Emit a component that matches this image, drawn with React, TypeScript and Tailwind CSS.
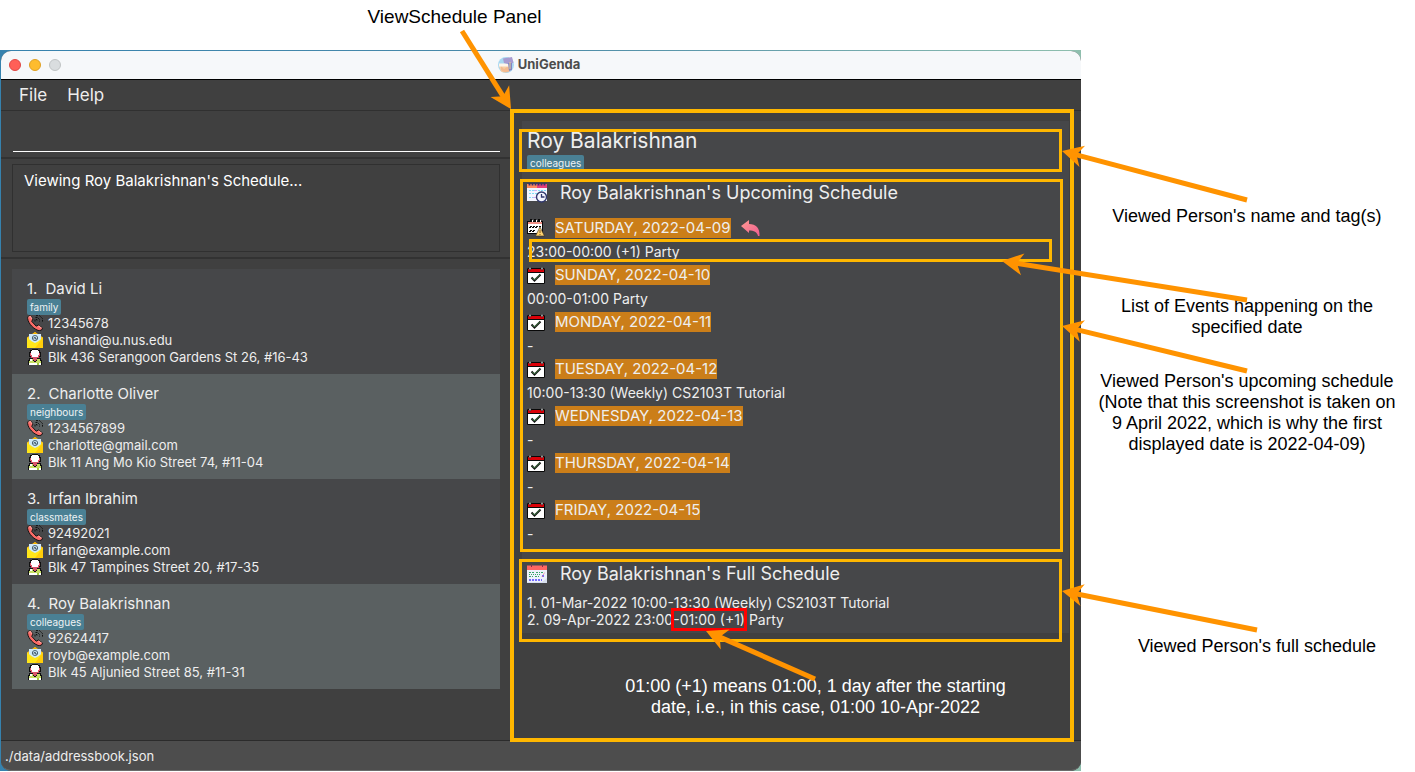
import React from "react";

type Point = [number, number];

interface Person {
  name: string;
  tag: string;
  phone: string;
  email: string;
  address: string;
}

const people: Person[] = [
  { name: "David Li", tag: "family", phone: "12345678", email: "vishandi@u.nus.edu", address: "Blk 436 Serangoon Gardens St 26, #16-43" },
  { name: "Charlotte Oliver", tag: "neighbours", phone: "1234567899", email: "charlotte@gmail.com", address: "Blk 11 Ang Mo Kio Street 74, #11-04" },
  { name: "Irfan Ibrahim", tag: "classmates", phone: "92492021", email: "irfan@example.com", address: "Blk 47 Tampines Street 20, #17-35" },
  { name: "Roy Balakrishnan", tag: "colleagues", phone: "92624417", email: "royb@example.com", address: "Blk 45 Aljunied Street 85, #11-31" },
];

const days = [
  { date: "SATURDAY, 2022-04-09", events: "23:00-00:00 (+1) Party", today: true },
  { date: "SUNDAY, 2022-04-10", events: "00:00-01:00 Party" },
  { date: "MONDAY, 2022-04-11", events: "-" },
  { date: "TUESDAY, 2022-04-12", events: "10:00-13:30 (Weekly) CS2103T Tutorial" },
  { date: "WEDNESDAY, 2022-04-13", events: "-" },
  { date: "THURSDAY, 2022-04-14", events: "-" },
  { date: "FRIDAY, 2022-04-15", events: "-" },
];

function Arrow({ from, to }: { from: Point; to: Point }) {
  const dx = to[0] - from[0];
  const dy = to[1] - from[1];
  const len = Math.hypot(dx, dy);
  const ux = dx / len;
  const uy = dy / len;
  const at = (back: number, side: number) => `${to[0] - ux * back - uy * side},${to[1] - uy * back + ux * side}`;
  return (
    <g fill="#ff9300">
      <line x1={from[0]} y1={from[1]} x2={to[0] - ux * 14} y2={to[1] - uy * 14} stroke="#ff9300" strokeWidth="5" />
      <polygon points={`${at(0, 0)} ${at(21, 11)} ${at(15, 0)} ${at(21, -11)}`} />
    </g>
  );
}

function Logo() {
  return (
    <svg width="16" height="16" viewBox="0 0 16 16" aria-hidden="true">
      <circle cx="8" cy="8" r="8" fill="#a9d8f1" />
      <path d="M1 9h11v4a7 6 0 0 1-9 1.500z" fill="#f6cfa5" />
      <path d="M3 9l3 3 3-2 3 1v3a7 7 0 0 1-9-1z" fill="#f3bb91" />
      <path d="M1 6.500h10v3H1z" fill="#fff5ea" />
      <path d="M5 1.500 14 0l1.500 5.500-3.500 2-6-1.500z" fill="#a79bd0" />
      <path d="M10 6h4v7l-3 1z" fill="#8185c4" />
      <path d="M12 5v7" stroke="#e9cf8e" strokeWidth="1" />
    </svg>
  );
}

function PhoneIcon() {
  return (
    <svg width="17" height="16" viewBox="0 0 17 16" className="shrink-0" aria-hidden="true">
      <path d="M1 1.500 3.500.7 6 4 4.700 6.300l4.500 4.900L11.500 10l4 3-.9 2-2.500.8C6.500 14 1.500 9 .6 3.500z" fill="#fb6b66" stroke="#141414" strokeWidth="1" />
      <path d="M1.500 2.200 3.300 1.500 5 4M11.500 11l3 2.300" stroke="#ffa09a" strokeWidth="1.200" fill="none" />
      <path d="M8 6.500v-2h2v2M8.500 2.500h2l2 2v2M9 .6h3.500l3 3v3" stroke="#111" strokeWidth="1" strokeDasharray="2 1" fill="none" />
    </svg>
  );
}

function MailIcon() {
  return (
    <svg width="17" height="17" viewBox="0 0 17 17" className="shrink-0" aria-hidden="true">
      <path d="M0 5.500 8 0l8 5.500V16H0z" fill="#ffc61a" />
      <path d="M2 2h12v7l-6 3-6-3z" fill="#cfeaf8" />
      <path d="M6 2 8 0l2 2z" fill="#f5b400" />
      <path d="M0 5.500 5 9.500l3 1.500 3-1.500 5-4V16H0z" fill="#ffe619" />
      <path d="M16 5.500V16H8z" fill="#ffcd0a" />
      <ellipse cx="8" cy="6" rx="2.700" ry="2.500" fill="none" stroke="#4a6577" />
      <path d="M7 7V5.500h1.500V7H10" stroke="#354b5c" fill="none" strokeWidth=".8" />
    </svg>
  );
}

function AddressIcon() {
  return (
    <svg width="17" height="17" viewBox="0 0 17 17" className="shrink-0" shapeRendering="crispEdges" aria-hidden="true">
      <path d="M2 9h12v2h1v5H1v-5h1z" fill="#111" />
      <path d="M3 10h10v2h1v3H2v-3h1z" fill="#c7de63" />
      <path d="M3 10h2v2H3zM2 14h12v2H2z" fill="#fff" />
      <path d="M10 14h2v2h-2z" fill="#a5c940" />
      <path d="M5 0h6v1h2v2h1v5h-2v2h-2v2H9v1H7v-1H6v-2H4V8H2V3h1V1h2z" fill="#111" />
      <path d="M5 1h6v1h1v2h1v3h-1v2h-2v2H9v1H7v-1H6V9H4V7H3V4h1V2h1z" fill="#d95468" />
      <path d="M5 1h6v1h1v4h-1v2H5V6H4V2h1z" fill="#fff" />
    </svg>
  );
}

function UpcomingIcon() {
  return (
    <svg width="21" height="21" viewBox="0 0 21 21" className="shrink-0" aria-hidden="true">
      <path d="M0 1h20v17H0z" fill="#f3f6ff" />
      <path d="M0 1h10v4H0z" fill="#ff8a5f" />
      <path d="M10 1h10v4H10z" fill="#e83e79" />
      <path d="M2.500 0v2.500M5.500 0v2.500M8.500 0v2.500M11.500 0v2.500M14.500 0v2.500M17.500 0v2.500" stroke="#33306b" strokeWidth="1.800" />
      <path d="M2 7.500h17M2 10.500h8M2 14.500h8" stroke="#80dcf5" strokeDasharray="2 1" />
      <path d="M7 7.500h3M6 14.500h3" stroke="#ccaef1" />
      <circle cx="14.500" cy="14" r="5" fill="#f5f7ff" stroke="#30386d" strokeWidth="1.400" />
      <path d="M14.500 11v3h3" stroke="#30386d" strokeWidth="1.300" fill="none" />
    </svg>
  );
}

function FullIcon() {
  return (
    <svg width="21" height="21" viewBox="0 0 21 21" className="shrink-0" aria-hidden="true">
      <path d="M0 2h20v16l-1 1H1l-1-1z" fill="#edf1fc" />
      <path d="M0 1.500h20V6H0z" fill="#ff6663" />
      <path d="M4.500 0v3M15.500 0v3" stroke="#78334b" />
      <path d="M2 8.500h5M9 8.500h4M14 8.500h3M2 12.500h4M8 12.500h4" stroke="#37a667" strokeDasharray="2 1" />
      <path d="M2 10.500h5M8 10.500h5" stroke="#37a667" strokeDasharray="1 1" />
      <path d="M2 16h13M15 12h3" stroke="#746cff" strokeWidth="2" strokeDasharray="2 1" />
      <path d="m15 13 3-5" stroke="#e16978" strokeDasharray="1 1" />
      <path d="M0 18h15l5-4v5H0z" fill="#d8dfef" />
    </svg>
  );
}

function TodayIcon() {
  return (
    <svg width="18" height="18" viewBox="0 0 18 18" className="shrink-0" aria-hidden="true">
      <g shapeRendering="crispEdges">
        <path d="M0 2h16v13H0z" fill="#0a0a0a" />
        <path d="M1 3h14v2H1z" fill="#f19187" />
        <path d="M1 5h14v9H1z" fill="#fff" />
        <path d="M3 0h2v3H3zM7 0h2v3H7zM11 0h2v3h-2z" fill="#0a0a0a" />
        <path d="M5 1h1v2H5zM9 1h1v2H9zM13 1h1v2h-1z" fill="#fff" />
        <path d="M3 7h2v1H3zM6 7h2v1H6zM9 7h2v1H9zM12 7h2v1h-2zM2 8h2v1H2zM5 8h2v1H5zM8 8h2v1H8zM3 11h2v1H3zM6 11h2v1H6zM2 12h2v1H2zM5 12h2v1H5z" fill="#0a0a0a" />
      </g>
      <path d="m13 8 4.500 9h-9z" fill="#ffd470" stroke="#34281b" strokeWidth=".6" />
      <path d="M13 11v3M13 15v1" stroke="#7b5325" />
    </svg>
  );
}

function DayIcon() {
  return (
    <svg width="18" height="17" viewBox="0 0 18 17" className="shrink-0" aria-hidden="true">
      <path d="M.5 1.500h17v15H.5z" fill="#fff" stroke="#080808" />
      <path d="M1 2h16v3H1z" fill="#db0008" />
      <path d="M1 5.500h16" stroke="#090909" />
      <rect x="2" y="0" width="2" height="3" rx="1" fill="#c4c8c8" stroke="#181818" strokeWidth=".6" />
      <rect x="14" y="0" width="2" height="3" rx="1" fill="#c4c8c8" stroke="#181818" strokeWidth=".6" />
      <path d="m4.500 10.500 3 3 6-6" fill="none" stroke="#151515" strokeWidth="2" />
      <path d="m5.500 11 2 2 5-5" fill="none" stroke="#51a557" strokeWidth=".8" />
    </svg>
  );
}

function ReplyIcon() {
  return (
    <svg width="19" height="17" viewBox="0 0 19 17" aria-hidden="true">
      <defs>
        <linearGradient id="reply" x1="0" y1="0" x2="1" y2="1">
          <stop offset="0" stopColor="#ff9c91" />
          <stop offset="1" stopColor="#ef5b91" />
        </linearGradient>
      </defs>
      <path d="M0 6 8 0v4c7 0 11 4 10.500 12H17c-1-4-4-5.500-9-5.500V13z" fill="url(#reply)" />
    </svg>
  );
}

function Tag({ children }: { children: React.ReactNode }) {
  return (
    <span className="inline-block h-4 rounded-[2px] bg-[#4a8094] px-[3px] text-[10px] leading-4 text-[#eef3f4]">{children}</span>
  );
}

function Outline({ className }: { className: string }) {
  return <span aria-hidden="true" className={`pointer-events-none absolute ${className}`} />;
}

function PersonCard({ person, index }: { person: Person; index: number }) {
  return (
    <li className="bg-[#464749] px-[15px] pb-2 pt-[9px] text-[#eeeeee] even:bg-[#5a6061]">
      <h2 className="flex h-[21px] gap-2 text-[15px] leading-[21px]">
        <span>{index + 1}.</span>
        <span>{person.name}</span>
      </h2>
      <div className="flex h-4">
        <Tag>{person.tag}</Tag>
      </div>
      <div className="text-[13px] leading-[17px]">
        <p className="flex gap-1"><PhoneIcon />{person.phone}</p>
        <p className="flex gap-1"><MailIcon />{person.email}</p>
        <p className="flex gap-1"><AddressIcon />{person.address}</p>
      </div>
    </li>
  );
}

function SchedulePanel() {
  return (
    <section aria-label="View schedule" className="relative px-3 pb-[22px] pt-[10px] text-[#eeeeee]">
      <div className="bg-[#464749] pl-[5px]">
        <header className="relative flex h-[58px] flex-col pt-[7px]">
          <h1 className="mb-[2px] text-[21px] leading-[25px]">Roy Balakrishnan</h1>
          <div className="flex"><Tag>colleagues</Tag></div>
          <Outline className="-left-2 right-[7px] top-2 h-[43px] border-3 border-[#ffb700]" />
        </header>
        <section className="relative h-[380px]">
          <h2 className="flex h-7 items-center gap-3 text-lg leading-7"><UpcomingIcon />Roy Balakrishnan's Upcoming Schedule</h2>
          <ul className="pt-[11px]">
            {days.map((day) => (
              <li key={day.date} className="relative h-[47px]">
                <div className="flex h-5 items-center">
                  {day.today ? <TodayIcon /> : <DayIcon />}
                  <time className="ml-[10px] bg-[#cb7e19] text-[15px] leading-5">{day.date}</time>
                  {day.today && (
                    <button type="button" aria-label="Back" className="ml-[10px]"><ReplyIcon /></button>
                  )}
                </div>
                <p className="pt-[5px] text-sm leading-[18px]">{day.events}</p>
                {day.today && <Outline className="left-[2px] right-[17px] top-[21px] h-[23px] border-3 border-[#ffb700]" />}
              </li>
            ))}
          </ul>
          <Outline className="-left-[7px] right-[6px] top-0 h-[373px] border-3 border-[#ffb700]" />
        </section>
        <section className="relative h-[74px]">
          <h2 className="flex h-[30px] items-center gap-3 text-lg leading-7"><FullIcon />Roy Balakrishnan's Full Schedule</h2>
          <ol className="pt-[5px] text-sm leading-[17px]">
            <li>1. 01-Mar-2022 10:00-13:30 (Weekly) CS2103T Tutorial</li>
            <li>
              2. 09-Apr-2022 23:00
              <span className="relative">
                -01:00 (+1)
                <Outline className="-inset-x-[2px] -inset-y-[3px] border-3 border-[#ff0000]" />
              </span>{" "}
              Party
            </li>
          </ol>
          <Outline className="-left-2 right-[7px] top-0 h-[83px] border-3 border-[#ffb700]" />
        </section>
      </div>
      <p className="pl-10 pt-[43px] text-center font-['Liberation_Sans',Arial,sans-serif] text-lg leading-[21px] text-white">
        01:00 (+1) means 01:00, 1 day after the starting
        <br />
        date, i.e., in this case, 01:00 10-Apr-2022
      </p>
      <Outline className="-bottom-[2px] -top-[2px] left-0 right-[7px] border-4 border-[#ffb700]" />
      <svg className="pointer-events-none absolute -left-[60px] -top-[111px] z-10" width="400" height="772" viewBox="450 0 400 772" aria-hidden="true">
        <Arrow from={[462, 31]} to={[511, 109]} />
        <Arrow from={[815, 679]} to={[706, 631]} />
      </svg>
    </section>
  );
}

function AppWindow() {
  return (
    <div className="bg-gradient-to-r from-[#3682ae] via-[#4a8aa8] to-[#8fbfae] pl-px pt-px">
      <div className="rounded-[10px] bg-[#404040] text-[#eeeeee]">
        <header className="relative flex h-7 items-center justify-center rounded-t-[10px] bg-[#f6f8fa]">
          <div className="absolute left-2 flex gap-2">
            <button type="button" aria-label="Close" className="size-3 rounded-full border border-[#df4744] bg-[#ff5f57]" />
            <button type="button" aria-label="Minimise" className="size-3 rounded-full border border-[#dfa023] bg-[#febc2e]" />
            <button type="button" aria-label="Zoom" className="size-3 rounded-full border border-[#c0c4c5] bg-[#d9dddf]" />
          </div>
          <div className="flex items-center gap-1 pr-1 text-[13px] font-bold text-[#4c4c4c]"><Logo />UniGenda</div>
        </header>
        <nav aria-label="Menu" className="flex h-8 gap-5 border-b border-t border-b-[#303030] border-t-black pl-[18px] text-[17px] leading-[29px]">
          <button type="button">File</button>
          <button type="button">Help</button>
        </nav>
        <main className="grid grid-cols-[509fr_571fr]">
          <div className="min-w-0">
            <div className="border-b-2 border-[#323232] pb-[5px] pl-3 pr-[10px]">
              <input type="text" aria-label="Command" className="block h-[41px] w-full border-b border-white bg-transparent text-base outline-none" />
            </div>
            <div className="border-b-2 border-[#323232] py-[5px] pl-[11px] pr-[10px]">
              <textarea readOnly aria-label="Result" defaultValue="Viewing Roy Balakrishnan's Schedule..." className="block h-[88px] w-full resize-none overflow-hidden border border-[#303030] bg-transparent px-[11px] py-[5px] text-[15px] leading-[22px] text-white outline-none" />
            </div>
            <ul className="pl-[11px] pr-[10px] pt-[10px]">
              {people.map((person, i) => <PersonCard key={person.name} person={person} index={i} />)}
            </ul>
          </div>
          <SchedulePanel />
        </main>
        <footer className="h-[31px] rounded-b-[10px] border-b border-t border-b-[#6b6b6b] border-t-[#2b2b2b] bg-[#4d4d4d] pl-1 text-[13px] leading-[31px]">./data/addressbook.json</footer>
      </div>
    </div>
  );
}

export default function App() {
  return (
    <div className="relative flex min-w-[1200px] items-start bg-white font-['Inter','Liberation_Sans',sans-serif]">
      <div className="min-w-0 flex-1">
        <p className="h-[50px] pl-[34%] pt-[6px] font-['Liberation_Sans',Arial,sans-serif] text-[19px] leading-[21px] text-black">ViewSchedule Panel</p>
        <AppWindow />
      </div>
      <aside className="w-[334px] shrink-0 pr-[2px] pt-[206px] text-center font-['Liberation_Sans',Arial,sans-serif] text-lg leading-[21px] text-black">
        <p>Viewed Person's name and tag(s)</p>
        <p className="pt-[69px]">List of Events happening on the<br />specified date</p>
        <p className="pt-[33px]">Viewed Person's upcoming schedule<br />(Note that this screenshot is taken on<br />9 April 2022, which is why the first<br />displayed date is 2022-04-09)</p>
        <p className="pl-5 pt-[181px]">Viewed Person's full schedule</p>
      </aside>
      <svg className="pointer-events-none absolute right-0 top-0 z-10" width="415" height="771" viewBox="1000 0 415 771" aria-hidden="true">
        <Arrow from={[1247, 200]} to={[1062, 151]} />
        <Arrow from={[1247, 300]} to={[1002, 261]} />
        <Arrow from={[1247, 371]} to={[1062, 326]} />
        <Arrow from={[1257, 630]} to={[1062, 591]} />
      </svg>
    </div>
  );
}
